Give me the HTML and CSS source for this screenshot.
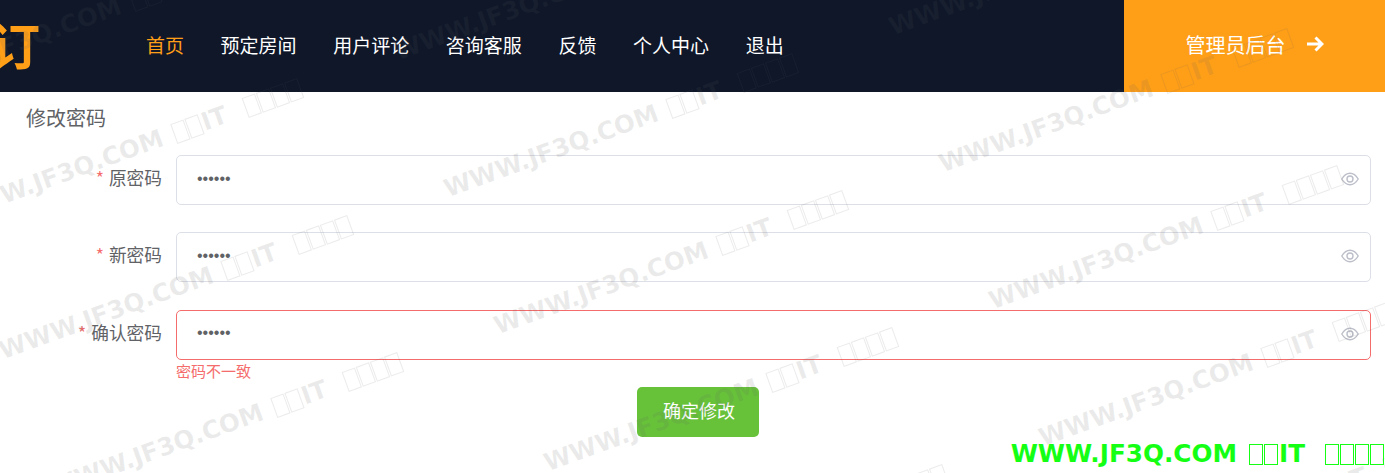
FILE: index.html
```html
<!DOCTYPE html>
<html>
<head>
  <meta charset="utf-8">
  <title>修改密码</title>
  <link rel="stylesheet" href="styles.css">
</head>
<body>
  <div class="header">
    <div class="logo"><span class="logo-text">预订</span></div>
    <div class="nav">
      <a class="nav-item active">首页</a>
      <a class="nav-item">预定房间</a>
      <a class="nav-item">用户评论</a>
      <a class="nav-item">咨询客服</a>
      <a class="nav-item">反馈</a>
      <a class="nav-item">个人中心</a>
      <a class="nav-item">退出</a>
    </div>
    <a class="admin-link">
      <span>管理员后台</span>
      <svg class="admin-arrow" viewBox="0 0 18 16" aria-hidden="true"><path d="M1 8h15M9.500 1.500 16 8l-6.500 6.500" fill="none" stroke="#fff" stroke-width="3"/></svg>
    </a>
  </div>

  <div class="content">
    <div class="page-title">修改密码</div>

    <div class="form-row">
      <label class="form-label"><span class="required">*</span>原密码</label>
      <div class="input-wrap">
        <input class="input" type="password" value="123456">
        <svg class="eye" viewBox="0 0 18 14" aria-hidden="true"><path d="M.8 7C3 3.300 5.800 1.300 9 1.300S15 3.300 17.200 7C15 10.700 12.200 12.700 9 12.700S3 10.700 .8 7Z" fill="none" stroke="currentColor" stroke-width="1.400"/><circle cx="9" cy="7" r="3" fill="none" stroke="currentColor" stroke-width="1.400"/></svg>
      </div>
    </div>

    <div class="form-row">
      <label class="form-label"><span class="required">*</span>新密码</label>
      <div class="input-wrap">
        <input class="input" type="password" value="123456">
        <svg class="eye" viewBox="0 0 18 14" aria-hidden="true"><path d="M.8 7C3 3.300 5.800 1.300 9 1.300S15 3.300 17.200 7C15 10.700 12.200 12.700 9 12.700S3 10.700 .8 7Z" fill="none" stroke="currentColor" stroke-width="1.400"/><circle cx="9" cy="7" r="3" fill="none" stroke="currentColor" stroke-width="1.400"/></svg>
      </div>
    </div>

    <div class="form-row has-error">
      <label class="form-label"><span class="required">*</span>确认密码</label>
      <div class="input-wrap">
        <input class="input" type="password" value="123456">
        <svg class="eye" viewBox="0 0 18 14" aria-hidden="true"><path d="M.8 7C3 3.300 5.800 1.300 9 1.300S15 3.300 17.200 7C15 10.700 12.200 12.700 9 12.700S3 10.700 .8 7Z" fill="none" stroke="currentColor" stroke-width="1.400"/><circle cx="9" cy="7" r="3" fill="none" stroke="currentColor" stroke-width="1.400"/></svg>
        <div class="form-error">密码不一致</div>
      </div>
    </div>

    <div class="actions">
      <button class="button-primary">确定修改</button>
    </div>
  </div>

  <!-- watermark layer -->
  <div class="watermarks">
    <div class="wm wm-1">WWW.JF3Q.COM<i class="box box-first"></i><i class="box"></i>IT<i class="box box-gap"></i><i class="box"></i><i class="box"></i><i class="box"></i></div>
    <div class="wm wm-2">WWW.JF3Q.COM<i class="box box-first"></i><i class="box"></i>IT<i class="box box-gap"></i><i class="box"></i><i class="box"></i><i class="box"></i></div>
    <div class="wm wm-3">WWW.JF3Q.COM<i class="box box-first"></i><i class="box"></i>IT<i class="box box-gap"></i><i class="box"></i><i class="box"></i><i class="box"></i></div>
    <div class="wm wm-4">WWW.JF3Q.COM<i class="box box-first"></i><i class="box"></i>IT<i class="box box-gap"></i><i class="box"></i><i class="box"></i><i class="box"></i></div>
    <div class="wm wm-5">WWW.JF3Q.COM<i class="box box-first"></i><i class="box"></i>IT<i class="box box-gap"></i><i class="box"></i><i class="box"></i><i class="box"></i></div>
    <div class="wm wm-6">WWW.JF3Q.COM<i class="box box-first"></i><i class="box"></i>IT<i class="box box-gap"></i><i class="box"></i><i class="box"></i><i class="box"></i></div>
    <div class="wm wm-7">WWW.JF3Q.COM<i class="box box-first"></i><i class="box"></i>IT<i class="box box-gap"></i><i class="box"></i><i class="box"></i><i class="box"></i></div>
    <div class="wm wm-8">WWW.JF3Q.COM<i class="box box-first"></i><i class="box"></i>IT<i class="box box-gap"></i><i class="box"></i><i class="box"></i><i class="box"></i></div>
    <div class="wm wm-9">WWW.JF3Q.COM<i class="box box-first"></i><i class="box"></i>IT<i class="box box-gap"></i><i class="box"></i><i class="box"></i><i class="box"></i></div>
    <div class="wm wm-10">WWW.JF3Q.COM<i class="box box-first"></i><i class="box"></i>IT<i class="box box-gap"></i><i class="box"></i><i class="box"></i><i class="box"></i></div>
    <div class="wm wm-11">WWW.JF3Q.COM<i class="box box-first"></i><i class="box"></i>IT<i class="box box-gap"></i><i class="box"></i><i class="box"></i><i class="box"></i></div>
    <div class="wm wm-12">WWW.JF3Q.COM<i class="box box-first"></i><i class="box"></i>IT<i class="box box-gap"></i><i class="box"></i><i class="box"></i><i class="box"></i></div>
    <div class="wm wm-13">WWW.JF3Q.COM<i class="box box-first"></i><i class="box"></i>IT<i class="box box-gap"></i><i class="box"></i><i class="box"></i><i class="box"></i></div>
    <div class="wm wm-14">WWW.JF3Q.COM<i class="box box-first"></i><i class="box"></i>IT<i class="box box-gap"></i><i class="box"></i><i class="box"></i><i class="box"></i></div>
  </div>

  <div class="site-stamp">WWW.JF3Q.COM<i class="box box-first"></i><i class="box"></i>IT<i class="box box-gap"></i><i class="box"></i><i class="box"></i><i class="box"></i></div>
</body>
</html>
```

FILE: styles.css
```css
* {
  box-sizing: border-box;
  margin: 0;
  padding: 0;
}

html,
body {
  height: 100%;
  overflow: hidden;
}

body {
  font-family: "Noto Sans CJK SC", "Liberation Sans", sans-serif;
  color: #606266;
  background: #fff;
  position: relative;
}

.header {
  height: 92px;
  background: #0f1729;
  display: flex;
  align-items: center;
}

.logo {
  width: 40px;
  height: 92px;
  overflow: hidden;
  display: flex;
  justify-content: flex-end;
  align-items: center;
  flex-shrink: 0;
}

.logo-text {
  font-size: 50px;
  font-weight: 700;
  line-height: 86px;
  height: 92px;
  color: #ff9f18;
  white-space: nowrap;
  flex-shrink: 0;
}

.nav {
  flex: 1;
  display: flex;
  gap: 36.600px;
  padding: 0 0 4px 106px;
}

.nav-item {
  font-size: 19px;
  color: #fff;
  white-space: nowrap;
}

.nav-item.active {
  color: #ff9f18;
}

.admin-link {
  width: 261px;
  height: 92px;
  padding-bottom: 4px;
  background: #ff9f18;
  color: #fff;
  font-size: 20px;
  display: flex;
  align-items: center;
  justify-content: center;
  gap: 20px;
}

.admin-arrow {
  width: 18px;
  height: 16px;
}

.content {
  padding: 0 14px 0 26px;
}

.page-title {
  font-size: 20px;
  line-height: 30px;
  height: 63px;
  padding-top: 11px;
}

.form-row {
  display: flex;
  margin-bottom: 27.400px;
}

.form-label {
  width: 136px;
  margin-right: 14px;
  flex-shrink: 0;
  font-size: 17.700px;
  line-height: 45px;
  text-align: right;
}

.required {
  color: #f56c6c;
  margin-right: 5px;
}

.input-wrap {
  flex: 1;
  position: relative;
}

.input {
  display: block;
  width: 100%;
  height: 50px;
  padding: 0 40px 3px 20px;
  border: 1px solid #dcdfe6;
  border-radius: 5px;
  background: transparent;
  color: #606266;
  font-family: "Liberation Sans", sans-serif;
  font-size: 16px;
  outline: none;
}

.eye {
  position: absolute;
  right: 12px;
  top: 17px;
  width: 18px;
  height: 14px;
  color: #bcbfc9;
}

.has-error .input {
  border-color: #f56c6c;
}

.form-error {
  position: absolute;
  left: 0;
  top: 51px;
  font-size: 15px;
  line-height: 20px;
  color: #f56c6c;
}

.actions {
  display: flex;
  justify-content: center;
  padding-right: 2px;
}

.button-primary {
  width: 122px;
  height: 50px;
  padding: 0 0 4px 3px;
  border: none;
  border-radius: 5px;
  background: #67c23a;
  color: #fff;
  font-family: inherit;
  font-size: 18px;
}

.watermarks {
  position: absolute;
  inset: 0;
  overflow: hidden;
  pointer-events: none;
}

.wm,
.site-stamp {
  font-family: "DejaVu Sans", sans-serif;
  font-weight: 700;
  font-size: 24.700px;
  line-height: 30px;
  white-space: nowrap;
}

.wm {
  position: absolute;
  color: rgba(92, 92, 92, 0.12);
  transform: rotate(-20deg);
  transform-origin: 0 50%;
}

.box {
  display: inline-block;
  width: 14px;
  height: 21px;
  margin-right: 1px;
  border: 1px solid currentColor;
  vertical-align: -3px;
}

.box-first {
  margin-left: 12px;
}

.box-gap {
  margin-left: 20px;
}

.wm-1 { left: -92px; top: 68px; }
.wm-2 { left: 395px; top: 38px; }
.wm-3 { left: 890px; top: 13px; }
.wm-4 { left: -50px; top: 200px; }
.wm-5 { left: 445px; top: 175px; }
.wm-6 { left: 940px; top: 150px; }
.wm-7 { left: 0; top: 337px; }
.wm-8 { left: 495px; top: 312px; }
.wm-9 { left: 990px; top: 287px; }
.wm-10 { left: 50px; top: 474px; }
.wm-11 { left: 545px; top: 449px; }
.wm-12 { left: 1040px; top: 424px; }
.wm-13 { left: 595px; top: 586px; }
.wm-14 { left: 1090px; top: 561px; }

.site-stamp {
  position: absolute;
  right: 0;
  bottom: 4px;
  color: #14ff14;
}
```
